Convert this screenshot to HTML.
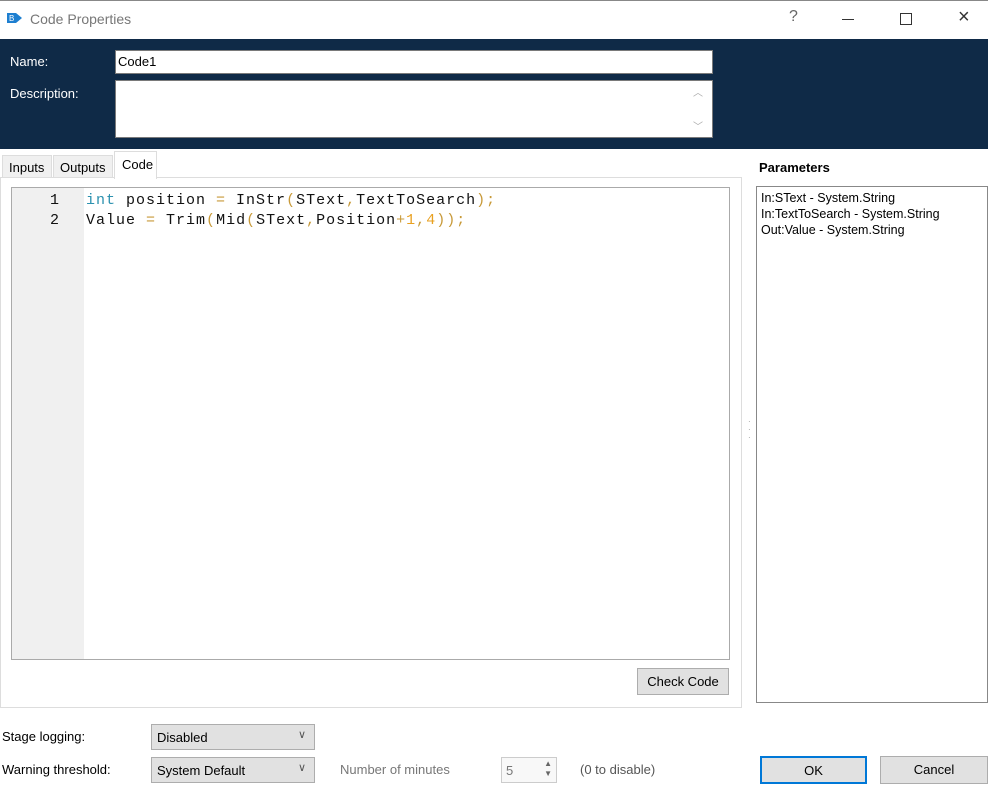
<!DOCTYPE html>
<html><head><meta charset="utf-8"><style>
*{margin:0;padding:0;box-sizing:border-box}
body{width:988px;height:788px;position:relative;background:#fff;font-family:"Liberation Sans",sans-serif;font-size:13px;color:#000;overflow:hidden}
.a{position:absolute;white-space:nowrap}
.code{font-family:"Liberation Mono",monospace;font-size:15px;letter-spacing:1px;color:#111}
.k{color:#2b91af}.p{color:#c89a3a}.n{color:#e8a020}
.combo{background:#e1e1e1;border:1px solid #adadad}
.combo span.v{position:absolute;right:8px;top:3px;color:#555;font-size:11px}
.btn{background:#e1e1e1;border:1px solid #adadad;text-align:center;line-height:25px}
</style></head><body>
<div class="a" style="left:0;top:0;width:988px;height:1px;background:#888"></div>
<svg class="a" style="left:7px;top:11px" width="16" height="14"><rect x="0" y="2" width="9" height="10" fill="#1e7fd0"/><path d="M9 2 L15 7 L9 12Z" fill="#1e7fd0"/><text x="2" y="10" font-size="8" fill="#fff" font-family="Liberation Sans">B</text></svg>
<div class="a" style="left:30px;top:11px;font-size:14px;color:#777">Code Properties</div>
<div class="a" style="left:789px;top:8px;font-size:16px;color:#666">?</div>
<div class="a" style="left:842px;top:19px;width:12px;height:1px;background:#333"></div>
<div class="a" style="left:900px;top:13px;width:12px;height:12px;border:1px solid #333"></div>
<div class="a" style="left:958px;top:6px;font-size:20px;color:#333">×</div>
<div class="a" style="left:0;top:39px;width:988px;height:110px;background:#0f2a47"></div>
<div class="a" style="left:10px;top:54px;color:#fff">Name:</div>
<div class="a" style="left:10px;top:86px;color:#fff">Description:</div>
<div class="a" style="left:115px;top:50px;width:598px;height:24px;background:#fff;border:1px solid #7a7a7a;padding:3px 2px">Code1</div>
<div class="a" style="left:115px;top:80px;width:598px;height:58px;background:#fff;border:1px solid #7a7a7a"></div>
<div class="a" style="left:693px;top:84px;color:#aaa;font-size:10px">︿</div>
<div class="a" style="left:693px;top:118px;color:#aaa;font-size:10px">﹀</div>
<div class="a" style="left:2px;top:155px;width:50px;height:23px;background:#f0f0f0;border:1px solid #ddd;padding:4px 6px">Inputs</div>
<div class="a" style="left:53px;top:155px;width:60px;height:23px;background:#f0f0f0;border:1px solid #ddd;padding:4px 6px">Outputs</div>
<div class="a" style="left:0;top:177px;width:742px;height:531px;border:1px solid #ddd;background:#fff"></div>
<div class="a" style="left:114px;top:151px;width:43px;height:28px;background:#fff;border:1px solid #ddd;border-bottom:none;padding:5px 7px">Code</div>
<div class="a" style="left:11px;top:187px;width:719px;height:473px;border:1px solid #aaa;background:#fff"></div>
<div class="a" style="left:12px;top:188px;width:72px;height:471px;background:#f0f0f0"></div>
<div class="a code" style="left:50px;top:192px">1</div>
<div class="a code" style="left:50px;top:212px">2</div>
<div class="a code" style="left:86px;top:192px"><span class="k">int</span> position <span class="p">=</span> InStr<span class="p">(</span>SText<span class="p">,</span>TextToSearch<span class="p">);</span></div>
<div class="a code" style="left:86px;top:212px">Value <span class="p">=</span> Trim<span class="p">(</span>Mid<span class="p">(</span>SText<span class="p">,</span>Position<span class="p">+</span><span class="n">1</span><span class="p">,</span><span class="n">4</span><span class="p">));</span></div>
<div class="a btn" style="left:637px;top:668px;width:92px;height:27px">Check Code</div>
<div class="a" style="left:748px;top:418px;color:#999;font-size:8px;line-height:8px">·<br>·<br>·</div>
<div class="a" style="left:759px;top:160px;font-weight:bold">Parameters</div>
<div class="a" style="left:756px;top:186px;width:232px;height:517px;border:1px solid #888;background:#fff;padding:3px 4px;font-size:12.5px;line-height:16px">In:SText - System.String<br>In:TextToSearch - System.String<br>Out:Value - System.String</div>
<div class="a" style="left:2px;top:729px">Stage logging:</div>
<div class="a" style="left:2px;top:762px">Warning threshold:</div>
<div class="a combo" style="left:151px;top:724px;width:164px;height:26px;padding:5px 5px">Disabled<span class="v">∨</span></div>
<div class="a combo" style="left:151px;top:757px;width:164px;height:26px;padding:5px 5px">System Default<span class="v">∨</span></div>
<div class="a" style="left:340px;top:762px;color:#777">Number of minutes</div>
<div class="a" style="left:501px;top:757px;width:56px;height:26px;border:1px solid #ccc;background:#f8f8f8;padding:5px 4px;color:#777">5<span style="position:absolute;right:4px;top:1px;font-size:8px;line-height:10px;color:#666">▲<br>▼</span></div>
<div class="a" style="left:580px;top:762px;color:#555">(0 to disable)</div>
<div class="a btn" style="left:760px;top:756px;width:107px;height:28px;border:2px solid #0078d7">OK</div>
<div class="a btn" style="left:880px;top:756px;width:108px;height:28px">Cancel</div>
</body></html>
